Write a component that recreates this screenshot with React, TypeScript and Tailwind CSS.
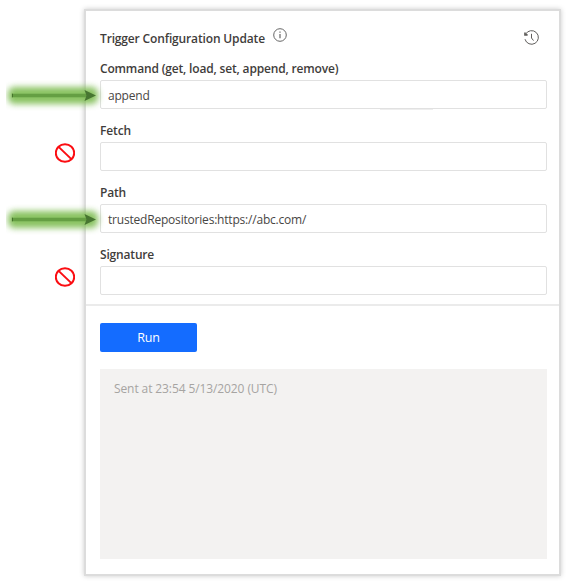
import React from "react";

function Arrow() {
  return (
    <svg className="absolute -left-[99px] -top-[5px]" width="108" height="40" viewBox="0 0 108 40" fill="none">
      <defs>
        <filter id="glow" x="-20" y="-20" width="148" height="80" filterUnits="userSpaceOnUse">
          <feGaussianBlur stdDeviation="3.2" />
        </filter>
        <clipPath id="edge">
          <rect x="4" y="0" width="104" height="40" />
        </clipPath>
      </defs>
      <g clipPath="url(#edge)">
        <rect x="6" y="11" width="90" height="17" rx="6" fill="#7cbb50" filter="url(#glow)" opacity="0.9" />
      </g>
      <path d="M10 19.5H88" stroke="#659f43" strokeWidth="3.6" />
      <path d="M10.4 17.7v3.6" stroke="#3f6a28" strokeWidth="0.9" />
      <path d="M82.5 14L94 19.5L82.5 25L84.5 19.5Z" fill="#477631" />
    </svg>
  );
}

function Prohibited() {
  return (
    <svg className="absolute -left-[46px] top-0" width="20" height="20" viewBox="0 0 20 20" fill="none" stroke="#fb0d12" strokeWidth="2">
      <ellipse cx="10" cy="10" rx="9.2" ry="8.8" />
      <path d="M3.6 3.9L16.4 16.1" />
    </svg>
  );
}

function Field({ label, labelClass, value, valueClass, marker }: {
  label: string; labelClass: string; value?: string; valueClass?: string; marker: React.ReactNode;
}) {
  return (
    <div className="flex h-[62px] flex-col">
      <div className="h-6 whitespace-nowrap pt-[2px] text-[12px] font-semibold leading-6">
        <span className={labelClass}>{label}</span>
      </div>
      <div className="relative mt-px flex h-[29px] items-center rounded-[2px] border border-[#e1e1e1] pl-[7px] pt-[3px] text-[12px] text-[#484644]">
        <span className={valueClass}>{value}</span>
        {marker}
      </div>
    </div>
  );
}

export default function App() {
  return (
    <main className="h-[584px] w-[571px] overflow-hidden bg-white pl-[86px] pt-[11px] font-['Open_Sans','Noto_Sans',sans-serif] text-[#3f3d3b]">
      <section className="flex h-[563px] w-[473px] flex-col bg-white shadow-[0_0_0_2px_#dcdcdc,0_0_5px_2px_#cccccc]">
        <div className="h-[293px] pl-[14px] pr-[12px] pt-[14px]">
          <header className="flex h-[30px] items-start">
            <h1 className="whitespace-nowrap pt-[4px] text-[12px] font-semibold leading-[19px]">
              <span className="tracking-[-0.15px]">Trigger Configuration Update</span>
            </h1>
            <svg className="ml-[8px] mt-[3px] shrink-0" width="14" height="14" viewBox="0 0 14 14" fill="none" stroke="#666" strokeWidth="1">
              <circle cx="7" cy="7" r="6.3" />
              <path d="M7 6v4.3M7 3.5v1.3" strokeWidth="1.2" />
            </svg>
            <svg className="ml-auto mr-[7px] mt-[4px] shrink-0" width="17" height="17" viewBox="0 0 17 17" fill="none" stroke="#605e5c" strokeWidth="1">
              <path d="M2.6 5.2A6.8 6.8 0 1 1 2 10.2M8.5 4.8V9L10.5 11.6" />
              <path d="M2 3.4V5.8H4.6" strokeWidth="1.7" />
            </svg>
          </header>
          <Field label="Command (get, load, set, append, remove)" labelClass="tracking-[-0.17px]" value="append" valueClass="tracking-[-0.2px]" marker={<><Arrow /><span className="absolute -bottom-[2px] left-[279px] h-px w-[53px] bg-[#eeeeee]" /></>} />
          <Field label="Fetch" labelClass="tracking-[-0.1px]" marker={<Prohibited />} />
          <Field label="Path" labelClass="tracking-[-0.2px]" value="trustedRepositories:https://abc.com/" valueClass="tracking-[-0.2px]" marker={<Arrow />} />
          <Field label="Signature" labelClass="tracking-[-0.17px]" marker={<Prohibited />} />
        </div>
        <div className="h-[2px] bg-[#ebebeb]" />
        <div className="pl-[14px] pr-[12px] pt-[17px]">
          <button className="block h-[29px] w-[97px] rounded-[2px] bg-[#146cff] pt-px text-[12.5px] tracking-[-0.1px] text-white">Run</button>
          <div className="mt-[17px] h-[190px] bg-[#f3f2f1] pl-[14px] pt-[10px] text-[12px] leading-[19px] text-[#a6a4a2]">
            <span className="tracking-[-0.1px]">Sent at 23:54 5/13/2020 (UTC)</span>
          </div>
        </div>
      </section>
    </main>
  );
}
